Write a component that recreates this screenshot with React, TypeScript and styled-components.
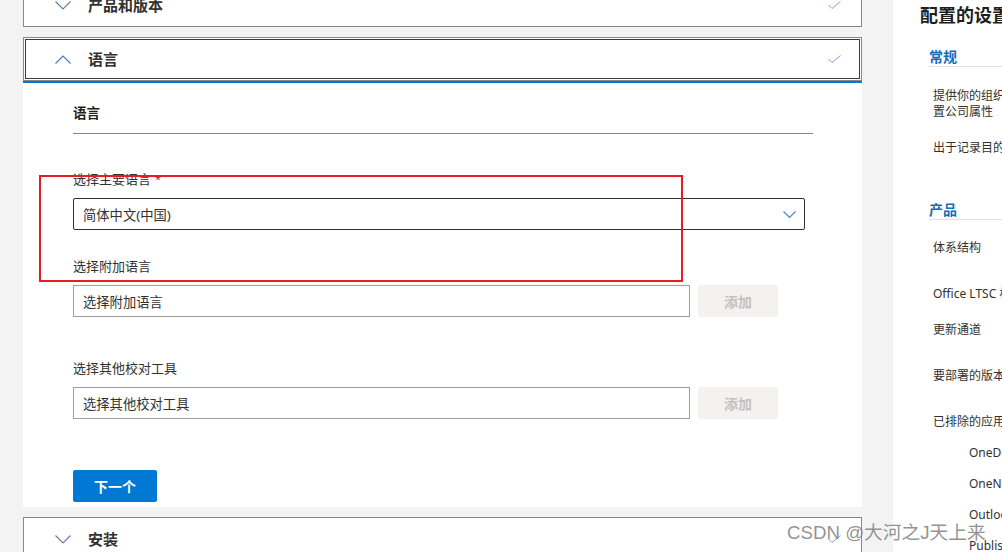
import React from "react";
import styled, { createGlobalStyle } from "styled-components";

const GlobalStyle = createGlobalStyle`
  html, body {
    margin: 0;
    padding: 0;
    background: #f3f3f3;
    font-family: "Segoe UI", "Noto Sans", "Noto Sans CJK SC", sans-serif;
    color: #323130;
  }
`;

const Page = styled.div`
  display: flex;
  width: 1002px;
  height: 552px;
  overflow: hidden;
  position: relative;
  background: #f3f3f3;
`;

const Main = styled.div`
  width: 839px;
  margin-left: 23px;
  margin-top: -17px;
  display: flex;
  flex-direction: column;
  gap: 10px;
  flex-shrink: 0;
`;

const Section = styled.div`
  background: #fff;
`;

const Header = styled.div<{ $open?: boolean }>`
  height: 44px;
  box-sizing: border-box;
  display: flex;
  align-items: center;
  padding: 0 20px 0 31px;
  border: 1px solid #8a8886;
  background: #fff;
  box-shadow: ${(p) =>
    p.$open ? "inset 0 0 0 1px #fff, inset 0 0 0 2px #3b3a39" : "none"};
`;

const Bar = styled.div`
  height: 2px;
  background: #0078d4;
`;

const HeaderTitle = styled.div`
  flex: 1;
  margin-left: 17px;
  font-size: 15px;
  font-weight: 600;
  color: #323130;
  line-height: 20px;
`;

const Body = styled.div`
  padding: 0 49px 5px 50px;
`;

const SubTitle = styled.div`
  padding: 20px 0 10px;
  font-size: 13.5px;
  font-weight: 700;
  line-height: 20px;
  color: #201f1e;
  border-bottom: 1px solid #8a8886;
`;

const Field = styled.div<{ $gap: number }>`
  margin-top: ${(p) => p.$gap}px;
`;

const Label = styled.div`
  font-size: 13px;
  line-height: 20px;
  margin-bottom: 9px;
  color: #323130;

  span {
    color: #a4262c;
    font-size: 11px;
    margin-left: 4px;
    vertical-align: top;
  }
`;

const Dropdown = styled.div`
  width: 732px;
  height: 32px;
  box-sizing: border-box;
  border: 1px solid #323130;
  border-radius: 2px;
  display: flex;
  align-items: center;
  justify-content: space-between;
  padding: 0 8px 0 9px;
  font-size: 13.3px;
`;

const Row = styled.div`
  display: flex;
  gap: 8px;
`;

const TextBox = styled.div`
  width: 617px;
  height: 32px;
  box-sizing: border-box;
  border: 1px solid #a19f9d;
  display: flex;
  align-items: center;
  padding: 0 9px;
  font-size: 13.3px;
  color: #323130;
`;

const AddButton = styled.button`
  width: 80px;
  height: 32px;
  border: none;
  border-radius: 2px;
  background: #f3f2f1;
  color: #c3c1bf;
  font-family: inherit;
  font-size: 14px;
  font-weight: 700;
`;

const NextButton = styled.button`
  margin-top: 51px;
  width: 84px;
  height: 32px;
  border: none;
  border-radius: 2px;
  background: #0078d4;
  color: #fff;
  font-family: inherit;
  font-size: 14px;
  font-weight: 700;
`;

const Side = styled.div`
  flex: 1;
  margin-left: 31px;
  background: #fff;
  padding-left: 27px;
  overflow: hidden;
  white-space: nowrap;
`;

const SideTitle = styled.div`
  margin-top: 3px;
  font-size: 18px;
  font-weight: 700;
  line-height: 24px;
  color: #201f1e;
`;

const SideHead = styled.div<{ $mt: number }>`
  margin: ${(p) => p.$mt}px 0 0 9px;
  width: 300px;
  font-size: 14px;
  font-weight: 700;
  line-height: 18px;
  color: #106ebe;
  border-bottom: 1px solid #e1dfdd;
`;

const SideItem = styled.div<{ $mt: number; $indent?: boolean }>`
  margin-top: ${(p) => p.$mt}px;
  margin-left: ${(p) => (p.$indent ? 49 : 13)}px;
  font-size: 12px;
  line-height: 16px;
  color: #323130;
  white-space: normal;
  width: 264px;
`;

const Annotation = styled.div`
  position: absolute;
  left: 39px;
  top: 175px;
  width: 640px;
  height: 103px;
  border: 2px solid #e81c24;
  pointer-events: none;
`;

const Watermark = styled.div`
  position: absolute;
  left: 787px;
  top: 521px;
  font-family: "Liberation Sans", "Noto Sans CJK SC", sans-serif;
  font-size: 18.7px;
  line-height: 24px;
  color: rgba(128, 128, 128, 0.85);
  white-space: nowrap;
`;

const Chevron = ({ up, color }: { up?: boolean; color: string }) => (
  <svg width="16" height="9" viewBox="0 0 16 9">
    <polyline
      points={up ? "0.5,8.5 8,1 15.5,8.5" : "0.5,0.5 8,8 15.5,0.5"}
      fill="none"
      stroke={color}
      strokeWidth="1.1"
    />
  </svg>
);

const Check = ({ color }: { color: string }) => (
  <svg width="13" height="8" viewBox="0 0 13 8">
    <polyline
      points="0.5,4 4,7.5 12.5,0.5"
      fill="none"
      stroke={color}
      strokeWidth="1"
    />
  </svg>
);

const SmallChevron = () => (
  <svg width="13" height="7" viewBox="0 0 13 7">
    <polyline
      points="0.5,0.5 6.5,6.5 12.5,0.5"
      fill="none"
      stroke="#4f7fc4"
      strokeWidth="1.1"
    />
  </svg>
);

export default function App() {
  return (
    <>
      <GlobalStyle />
      <Page>
        <Main>
          <Section>
            <Header>
              <Chevron color="#607ca8" />
              <HeaderTitle>产品和版本</HeaderTitle>
              <Check color="#7f9fd8" />
            </Header>
          </Section>

          <Section>
            <Header $open>
              <Chevron up color="#4a6fd8" />
              <HeaderTitle>语言</HeaderTitle>
              <Check color="#9b8fe0" />
            </Header>
            <Bar />
            <Body>
              <SubTitle>语言</SubTitle>
              <Field $gap={35}>
                <Label>
                  选择主要语言<span>*</span>
                </Label>
                <Dropdown>
                  简体中文(中国)
                  <SmallChevron />
                </Dropdown>
              </Field>
              <Field $gap={26}>
                <Label>选择附加语言</Label>
                <Row>
                  <TextBox>选择附加语言</TextBox>
                  <AddButton disabled>添加</AddButton>
                </Row>
              </Field>
              <Field $gap={41}>
                <Label>选择其他校对工具</Label>
                <Row>
                  <TextBox>选择其他校对工具</TextBox>
                  <AddButton disabled>添加</AddButton>
                </Row>
              </Field>
              <NextButton>下一个</NextButton>
            </Body>
          </Section>

          <Section>
            <Header>
              <Chevron color="#607ca8" />
              <HeaderTitle>安装</HeaderTitle>
              <Check color="#7f9fd8" />
            </Header>
          </Section>
        </Main>

        <Side>
          <SideTitle>配置的设置</SideTitle>
          <SideHead $mt={21}>常规</SideHead>
          <SideItem $mt={21}>
            提供你的组织名称和配置的描述。这些信息用于设置公司属性
          </SideItem>
          <SideItem $mt={20}>出于记录目的，请提供此配置的说明</SideItem>
          <SideHead $mt={45}>产品</SideHead>
          <SideItem $mt={20}>体系结构</SideItem>
          <SideItem $mt={30}>Office LTSC 标准版 2021 - 批量许可证</SideItem>
          <SideItem $mt={20}>更新通道</SideItem>
          <SideItem $mt={30}>要部署的版本</SideItem>
          <SideItem $mt={30}>已排除的应用</SideItem>
          <SideItem $mt={15} $indent>OneDrive (Groove)</SideItem>
          <SideItem $mt={15} $indent>OneNote</SideItem>
          <SideItem $mt={15} $indent>Outlook</SideItem>
          <SideItem $mt={15} $indent>Publisher</SideItem>
        </Side>

        <Annotation />
        <Watermark>CSDN @大河之J天上来</Watermark>
      </Page>
    </>
  );
}
